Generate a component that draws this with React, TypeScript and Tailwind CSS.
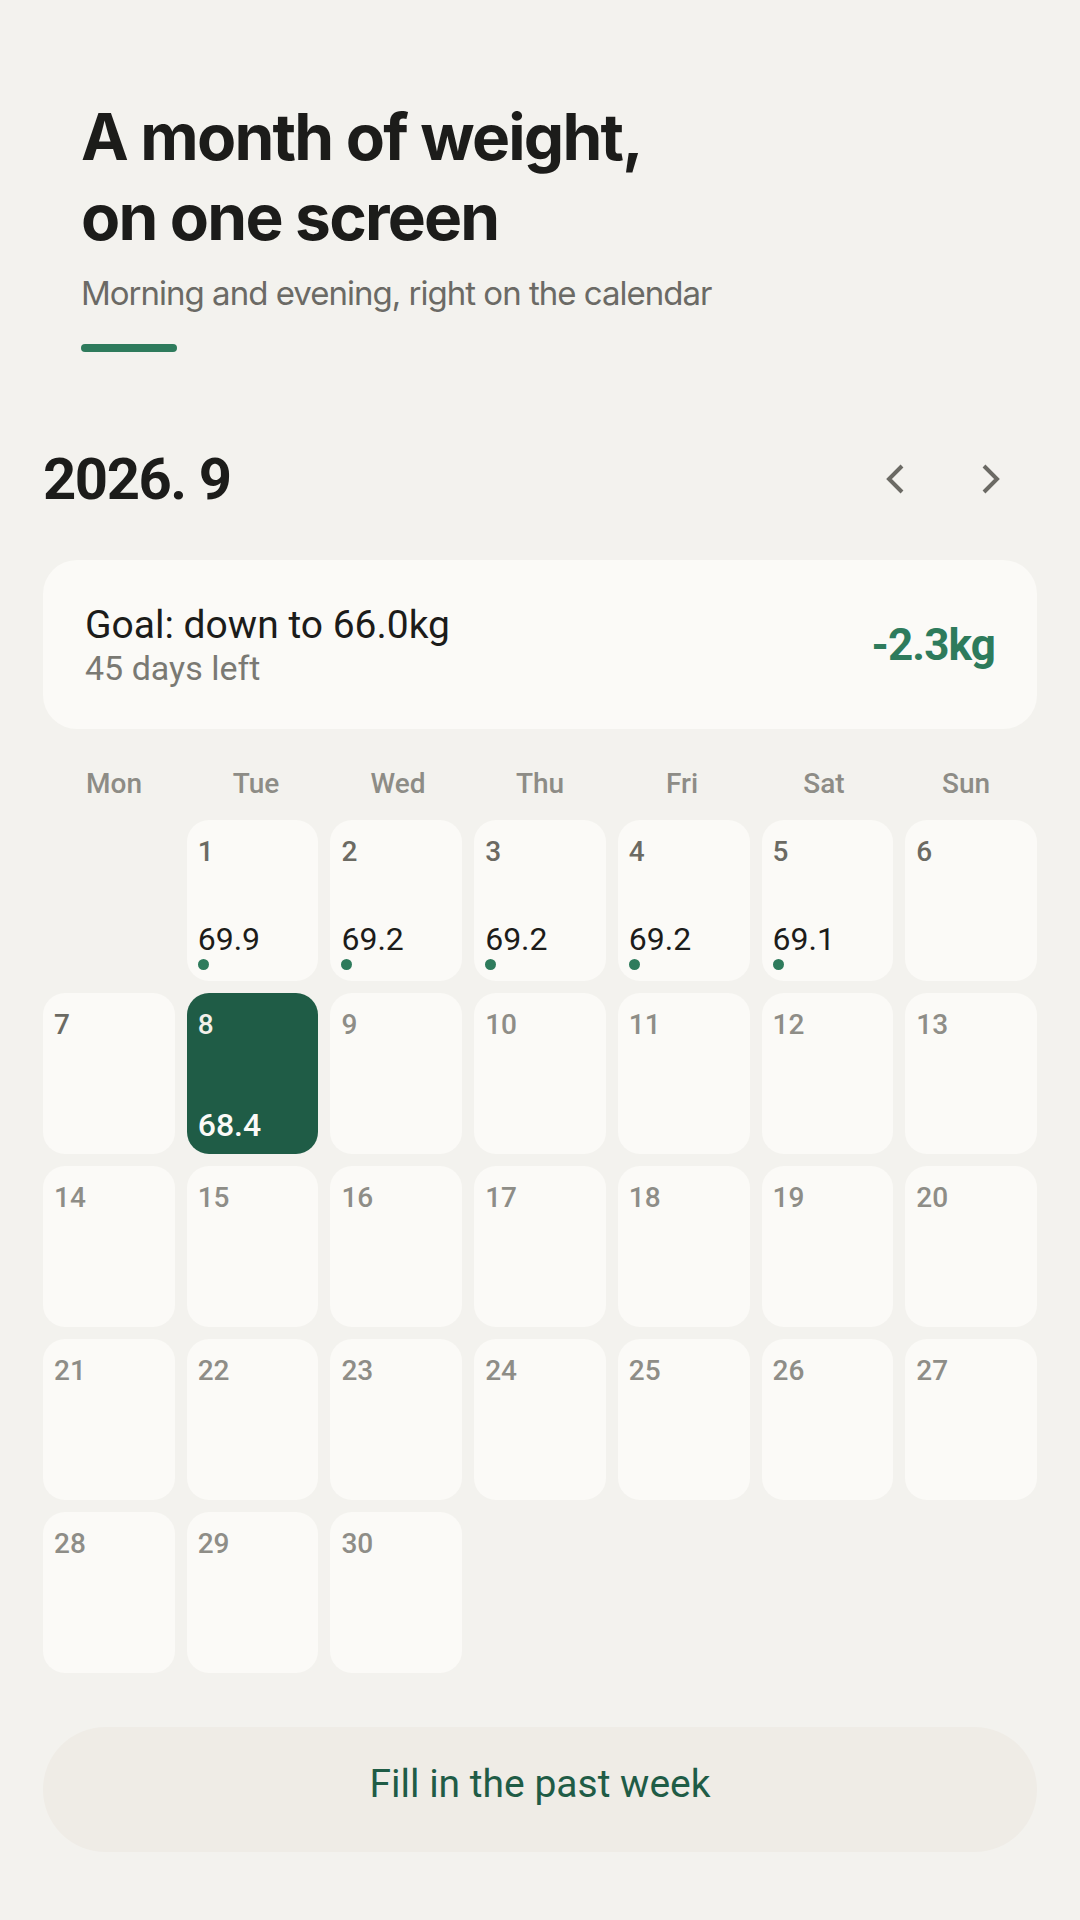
import React from "react";

type Cell = { day: number; value?: string; dot?: boolean; selected?: boolean; dark?: boolean };

const weekdays = ["Mon", "Tue", "Wed", "Thu", "Fri", "Sat", "Sun"];

const values: Record<number, string> = {
  1: "69.9",
  2: "69.2",
  3: "69.2",
  4: "69.2",
  5: "69.1",
};

function buildCells(): (Cell | null)[] {
  const cells: (Cell | null)[] = [null];
  for (let d = 1; d <= 30; d++) {
    if (d === 8) {
      cells.push({ day: d, value: "68.4", selected: true });
    } else {
      cells.push({ day: d, value: values[d], dot: !!values[d], dark: d <= 7 });
    }
  }
  return cells;
}

function ChevronLeft() {
  return (
    <svg width="18" height="30" viewBox="0 0 18 30" fill="none">
      <path d="M16 2 L3 15 L16 28" stroke="#6b6a64" strokeWidth="4" strokeLinejoin="miter" />
    </svg>
  );
}

function ChevronRight() {
  return (
    <svg width="18" height="30" viewBox="0 0 18 30" fill="none">
      <path d="M2 2 L15 15 L2 28" stroke="#6b6a64" strokeWidth="4" strokeLinejoin="miter" />
    </svg>
  );
}

function DayCell({ cell }: { cell: Cell }) {
  if (cell.selected) {
    return (
      <div className="h-[161px] rounded-[22px] bg-[#1f5c46] flex flex-col justify-between px-[11px] pt-[18px] pb-[13px]">
        <span className="text-[28px] leading-none font-medium text-[#f2f0ea]">{cell.day}</span>
        <span className="text-[32px] leading-none font-medium text-[#fbfaf7]">{cell.value}</span>
      </div>
    );
  }
  return (
    <div className="h-[161px] rounded-[22px] bg-[#fbfaf7] flex flex-col justify-between px-[11px] pt-[18px] pb-[11px]">
      <span
        className={
          cell.dark
            ? "text-[28px] leading-none font-medium text-[#6b6a63]"
            : "text-[28px] leading-none font-medium text-[#8e8d87]"
        }
      >
        {cell.day}
      </span>
      {cell.value ? (
        <div className="flex flex-col">
          <span className="text-[32px] leading-none text-[#1c1c1a]">{cell.value}</span>
          <span className="mt-[4px] h-[11px] w-[11px] rounded-full bg-[#2e7b5c]" />
        </div>
      ) : null}
    </div>
  );
}

export default function App() {
  const cells = buildCells();
  return (
    <div
      className="min-h-[1920px] w-full bg-[#f3f2ee]"
      style={{ fontFamily: "Roboto, 'Noto Sans', sans-serif" }}
    >
      <section className="px-[81px] pt-[97px]" style={{ fontFamily: "Inter, 'Noto Sans', sans-serif" }}>
        <h1 className="text-[64px] leading-[80px] font-bold tracking-[-0.028em] text-[#1c1c1a]">
          A month of weight,
          <br />
          on one screen
        </h1>
        <p className="mt-[14px] text-[33px] leading-[44px] tracking-[-0.03em] text-[#6b6a65]">
          Morning and evening, right on the calendar
        </p>
        <div className="mt-[29px] h-[8px] w-[96px] rounded-full bg-[#2e7b5c]" />
      </section>

      <section className="px-[43px] pt-[98px]">
        <div className="flex h-[58px] items-center justify-between">
          <h2 className="text-[58px] leading-none font-bold tracking-[-0.025em] text-[#1c1c1a]">2026. 9</h2>
          <div className="mr-[18px] flex items-center gap-[40px]">
            <button className="flex h-[56px] w-[56px] items-center justify-center">
              <ChevronLeft />
            </button>
            <button className="flex h-[56px] w-[56px] items-center justify-center">
              <ChevronRight />
            </button>
          </div>
        </div>

        <div className="mt-[52px] flex h-[169px] items-center justify-between rounded-[34px] bg-[#fbfaf7] px-[42px]">
          <div className="flex flex-col pt-[3px]">
            <span className="text-[39px] leading-[44px] text-[#1c1c1a]">Goal: down to 66.0kg</span>
            <span className="text-[34px] leading-[42px] text-[#7a7973]">45 days left</span>
          </div>
          <span className="text-[44px] leading-none font-bold tracking-[-0.02em] text-[#2e7b5c]">-2.3kg</span>
        </div>

        <div className="mt-[35px] grid grid-cols-7">
          {weekdays.map((w) => (
            <div key={w} className="text-center text-[28px] leading-[40px] font-medium text-[#8d8c86]">
              {w}
            </div>
          ))}
        </div>

        <div className="mt-[16px] grid grid-cols-7 gap-[12px]">
          {cells.map((c, i) => (c ? <DayCell key={i} cell={c} /> : <div key={i} />))}
        </div>

        <button className="mt-[54px] flex h-[125px] w-full items-center justify-center rounded-full bg-[#efece6] pb-[10px]">
          <span className="text-[39px] leading-none text-[#1f5c46]">Fill in the past week</span>
        </button>
      </section>
    </div>
  );
}
